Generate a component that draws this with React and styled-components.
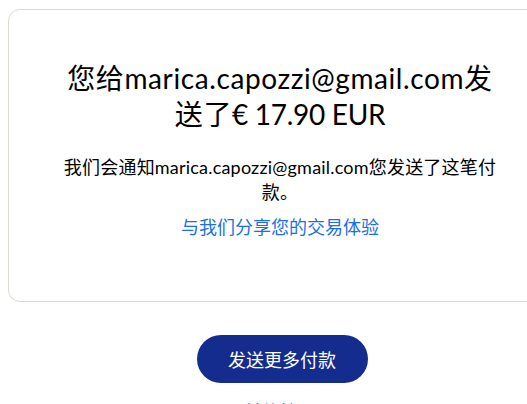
import styled, { createGlobalStyle } from "styled-components";

const Global = createGlobalStyle`
  body {
    margin: 0;
    background: #fff;
    font-family: Lato, "Noto Sans CJK SC", sans-serif;
    color: #000;
  }
`;

const Page = styled.div`
  width: 544px;
  padding: 9px 0 0 8px;
  display: flex;
  flex-direction: column;
  align-items: center;
`;

const Card = styled.div`
  box-sizing: border-box;
  width: 544px;
  height: 293px;
  border: 1px solid #dcdad0;
  border-radius: 12px;
  padding: 50px 0 0;
  display: flex;
  flex-direction: column;
  align-items: center;
`;

const Content = styled.div`
  width: 440px;
  text-align: center;
`;

const Title = styled.h1`
  margin: 0;
  font-size: 28px;
  line-height: 36px;
  font-weight: 400;
  letter-spacing: 0.6px;
`;

const Amount = styled.span`
  letter-spacing: -0.3px;
`;

const Note = styled.p`
  margin: 23px 0 0;
  font-size: 18px;
  line-height: 25px;
  letter-spacing: 0.2px;
`;

const Link = styled.a`
  display: block;
  margin-top: 10px;
  font-size: 18px;
  line-height: 25px;
  color: ${(p) => (p.$muted ? "#0551b5" : "#1a6fe6")};
  text-decoration: none;
`;

const Button = styled.button`
  margin: 33px 0 0 4px;
  width: 171px;
  height: 48px;
  border: none;
  border-radius: 24px;
  background: #142c8e;
  color: #fff;
  font-family: Lato, "Noto Sans CJK SC", sans-serif;
  font-size: 18px;
  font-weight: 400;
`;

const Footer = styled(Link)`
  margin-top: 17px;
`;

export default function App() {
  return (
    <>
      <Global />
      <Page>
        <Card>
          <Content>
            <Title>
              您给marica.capozzi@gmail.com发送了<Amount>€ 17.90 EUR</Amount>
            </Title>
            <Note>我们会通知marica.capozzi@gmail.com您发送了这笔付款。</Note>
            <Link href="#">与我们分享您的交易体验</Link>
          </Content>
        </Card>
        <Button>发送更多付款</Button>
        <Footer href="#" $muted>
          前往摘要
        </Footer>
      </Page>
    </>
  );
}
